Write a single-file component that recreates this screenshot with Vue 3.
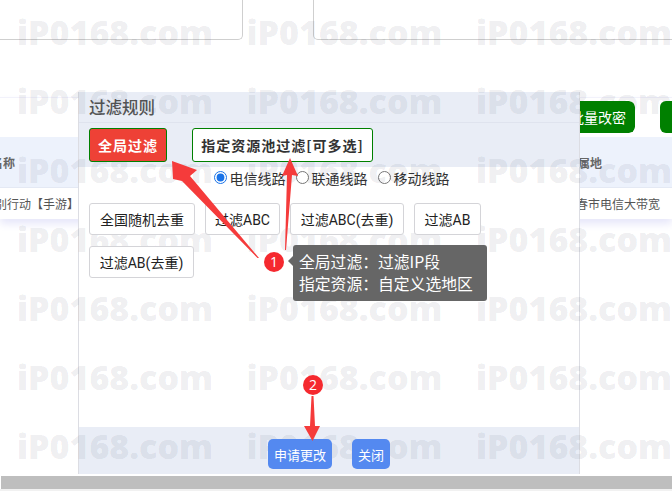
<script setup>
const marks = Array.from({ length: 21 }, (_, i) => i)
const options = [
  { label: '全国随机去重', width: 106 },
  { label: '过滤ABC', width: 75 },
  { label: '过滤ABC(去重)', width: 114 },
  { label: '过滤AB', width: 67 },
  { label: '过滤AB(去重)', width: 105 }
]
const lines = [
  { label: '电信线路', checked: true },
  { label: '联通线路', checked: false },
  { label: '移动线路', checked: false }
]
</script>

<template>
  <div class="page">
    <div class="cards">
      <div class="card card-a"></div>
      <div class="card card-b"></div>
    </div>

    <section class="table">
      <div class="toolbar">
        <button class="green clipped lift">批量改密</button>
        <button class="green lift">导出IP</button>
      </div>
      <div class="thead">
        <span class="th-a">名称</span>
        <span>归属地</span>
      </div>
      <div class="trow">
        <span class="td-a">别行动【手游】</span>
        <span class="td-b">春市电信大带宽</span>
      </div>
    </section>

    <div class="scrollbar"></div>

    <section class="modal">
      <header class="head">过滤规则</header>
      <div class="band">
        <button class="mode mode-on lift">全局过滤</button>
        <button class="mode mode-off lift">指定资源池过滤[可多选]</button>
      </div>
      <div class="body">
        <div class="radios">
          <label v-for="l in lines" :key="l.label" class="radio">
            <input type="radio" name="line" :checked="l.checked" />
            <span>{{ l.label }}</span>
          </label>
        </div>
        <div class="opts">
          <button
            v-for="o in options"
            :key="o.label"
            class="opt lift"
            :style="{ width: o.width + 'px' }"
          >{{ o.label }}</button>
        </div>
      </div>
      <footer class="foot">
        <button class="blue lift">申请更改</button>
        <button class="blue lift">关闭</button>
      </footer>
    </section>

    <div class="marks">
      <span v-for="m in marks" :key="m">iP0168.com</span>
    </div>

    <div class="tip">
      <div>全局过滤：过滤IP段</div>
      <div>指定资源：自定义选地区</div>
    </div>

    <svg class="arrows" viewBox="0 0 672 491" width="672" height="491">
      <g fill="#f53b3b">
        <polygon points="172,161 197,170 190,176 259,258 257.5,258 182,181 173,179" />
        <polygon points="290,158 298,176 292,175 286,250 285,250 287,175 282,176" />
        <polygon points="311.5,396 313.5,396 315,426 320,426 312.5,441 304,426 310,426" />
      </g>
      <circle cx="274" cy="262" r="10" fill="#f5292f" />
      <circle cx="313" cy="385" r="10" fill="#f5292f" />
      <text x="274" y="267" class="num">1</text>
      <text x="313" y="390" class="num">2</text>
    </svg>
  </div>
</template>

<style>
html, body { margin: 0; background: #fff; }
</style>

<style scoped>
.page {
  position: relative;
  width: 672px;
  height: 491px;
  overflow: hidden;
  background: #fff;
  font-family: "Noto Sans CJK SC", "Noto Sans", sans-serif;
  font-size: 14px;
  color: #333;
}
button { font-family: inherit; cursor: pointer; }
.lift { position: relative; z-index: 2; }

.cards { display: flex; gap: 70px; height: 40px; margin-left: -20px; margin-right: -20px; }
.card { box-sizing: border-box; height: 40px; border: 1px solid #cfcfcf; border-top: 0; border-radius: 0 0 5px 5px; }
.card-a { width: 263px; }
.card-b { flex: 1; }

.table { margin-top: 57px; box-shadow: 0 5px 8px #e7e7fa; }
.toolbar { display: flex; gap: 25px; height: 40px; padding: 3px 0 0 556px; box-sizing: border-box; border-top: 1px solid #f2f2fb; }
.green { height: 32px; border: 0; border-radius: 6px; background: #008000; color: #fff; font-size: 14px; padding: 0 9px 0 14px; white-space: nowrap; }
.clipped { clip-path: inset(0 0 0 24px round 0 6px 6px 0); }
.thead { display: grid; grid-template-columns: 566px 1fr; align-items: center; height: 51px; background: #edf2fc; border-bottom: 1px solid #e4e9f4; box-sizing: border-box; font-size: 12px; font-weight: 700; color: #666; padding-top: 1px; }
.th-a { margin-left: -9px; }
.trow { display: grid; grid-template-columns: 566px 1fr; align-items: center; height: 31px; background: #fff; font-size: 12px; color: #555; }
.td-a { margin-left: -5px; white-space: nowrap; }
.td-b { white-space: nowrap; margin-left: 10px; }
.scrollbar { position: absolute; left: 1px; right: 0; top: 476px; height: 13px; background: #bebebe; }
.page::after { content: ""; position: absolute; left: 0; right: 0; top: 489px; height: 2px; background: #f1f1f1; }

.modal {
  position: absolute;
  left: 78px;
  top: 92px;
  width: 502px;
  height: 382px;
  box-sizing: border-box;
  display: flex;
  flex-direction: column;
  background: #fff;
  border-left: 1px solid #dcdde3;
  border-right: 1px solid #dcdde3;
}
.head { height: 31px; box-sizing: border-box; padding: 0 10px; background: #e9edf6; border-bottom: 1px solid #dfe3ee; font-size: 16.5px; line-height: 30px; color: #555; font-weight: 500; }
.band { height: 44px; box-sizing: border-box; display: flex; gap: 25px; padding: 5px 10px 0; background: #e9edf6; }
.mode { height: 34px; box-sizing: border-box; border: 1px solid #008000; border-radius: 3px; padding: 0; font-size: 14px; font-weight: 700; letter-spacing: 1px; }
.mode-on { width: 78px; background: #ee4136; color: #fff; }
.mode-off { width: 181px; background: #fff; color: #333; }

.body { flex: 1; min-height: 0; display: flex; flex-direction: column; }
.radios { display: flex; justify-content: center; gap: 10px; height: 21px; align-items: center; padding-left: 5px; }
.radio { display: flex; align-items: center; gap: 3px; font-size: 14px; color: #333; line-height: 20px; }
.radio input { width: 13px; height: 13px; margin: 0; accent-color: #1a73e8; }
.opts { display: flex; flex-wrap: wrap; gap: 11px 10px; padding: 15px 10px 0; font-family: Roboto, "Noto Sans CJK SC", sans-serif; }
.opt { height: 32px; box-sizing: border-box; padding: 0; background: #fff; border: 1px solid #d4d4d8; border-radius: 3px; font-family: inherit; font-size: 14px; color: #222; white-space: nowrap; }

.foot { height: 47px; box-sizing: border-box; display: flex; justify-content: center; gap: 20px; padding-top: 12px; background: #e9edf6; }
.blue { height: 30px; box-sizing: border-box; padding: 0 6px; border: 0; border-radius: 5px; background: #5489f0; color: #fff; font-size: 13px; }

.marks {
  position: absolute;
  left: 17px;
  top: -2px;
  z-index: 1;
  display: grid;
  grid-template-columns: repeat(3, 229.5px);
  grid-auto-rows: 69px;
  align-items: center;
  pointer-events: none;
  font-family: "Open Sans", sans-serif;
  font-weight: 800;
  font-size: 34px;
  line-height: 69px;
  color: rgba(20, 30, 60, 0.085);
  white-space: nowrap;
}

.tip {
  position: absolute;
  left: 293px;
  top: 245px;
  z-index: 3;
  width: 194px;
  height: 56px;
  box-sizing: border-box;
  padding: 6px 6px;
  background: #666;
  border-radius: 3px;
  color: #fff;
  font-size: 15.8px;
  line-height: 22px;
  white-space: nowrap;
}
.tip::before {
  content: "";
  position: absolute;
  left: -5px;
  top: 11px;
  border-style: solid;
  border-width: 5px 5px 5px 0;
  border-color: transparent #666 transparent transparent;
}
.arrows { position: absolute; left: 0; top: 0; z-index: 4; pointer-events: none; }
.num { fill: #fff; font-size: 14px; text-anchor: middle; font-family: "Open Sans", sans-serif; }
</style>
